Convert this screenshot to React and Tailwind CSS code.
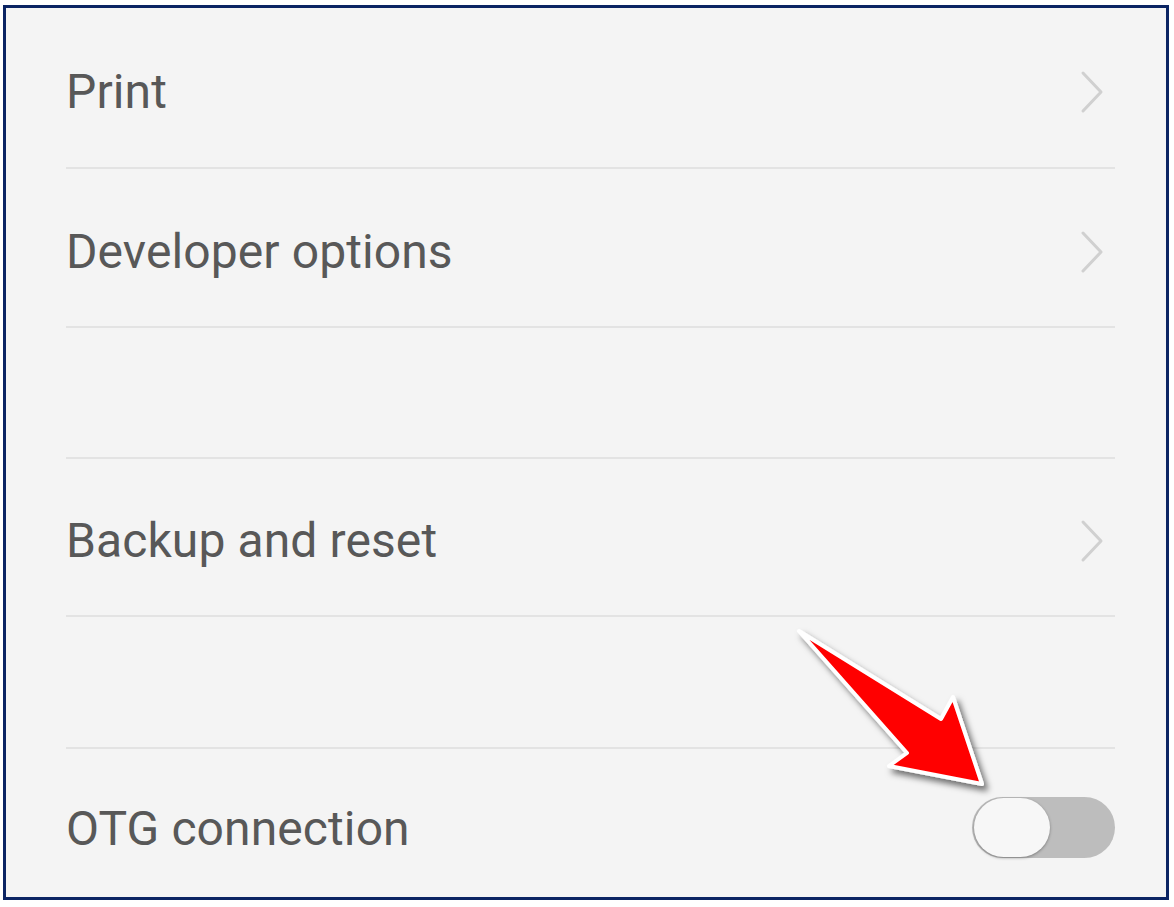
import React from 'react';

const Chevron = () => (
    <svg width="26" height="44" viewBox="0 0 26 44">
        <path d="M4 3 L22 22 L4 41" fill="none" stroke="#d0d0d0" strokeWidth="3" strokeLinecap="round" strokeLinejoin="round" />
    </svg>
);

const Divider = () => <div className="h-[2px] bg-[#e3e3e3]" />;

const Row = ({ label, height, chevron }) => (
    <div className={`flex items-center justify-between pt-2 ${height}`}>
        {label && <span className="text-[48px] text-[#585858] tracking-[0.1px]">{label}</span>}
        {chevron && <div className="mr-[10px]"><Chevron /></div>}
    </div>
);

const Arrow = () => (
    <svg className="absolute left-[780px] top-[615px] pointer-events-none" width="230" height="190" viewBox="780 615 230 190">
        <defs>
            <filter id="sh" x="-20%" y="-20%" width="140%" height="140%">
                <feDropShadow dx="4" dy="5" stdDeviation="3" floodColor="#000" floodOpacity="0.55" />
            </filter>
        </defs>
        <polygon
            points="799,631 941,719 953,697 982,784 889,766 907,753"
            fill="#ff0000"
            stroke="#ffffff"
            strokeWidth="4"
            strokeLinejoin="round"
            filter="url(#sh)"
        />
    </svg>
);

const Toggle = () => (
    <div className="relative w-[143px] h-[61px] rounded-full bg-[#bdbdbd] mt-[-4px]">
        <div className="absolute left-[2px] top-[1px] w-[76px] h-[59px] rounded-full bg-[#f7f7f7] shadow-[0_1px_3px_rgba(0,0,0,0.35)]" />
    </div>
);

export default function App() {
    return (
        <div className="relative w-[1174px] h-[907px] bg-white" style={{ fontFamily: 'Roboto, "Noto Sans", sans-serif' }}>
            <div className="absolute left-[3px] top-[5px] w-[1166px] h-[895px] border-[3px] border-[#0b2463] bg-[#f4f4f4] pl-[60px] pr-[51px] flex flex-col">
                <Row label="Print" height="h-[159px]" chevron />
                <Divider />
                <Row label="Developer options" height="h-[157px]" chevron />
                <Divider />
                <Row height="h-[129px]" />
                <Divider />
                <Row label="Backup and reset" height="h-[156px]" chevron />
                <Divider />
                <Row height="h-[130px]" />
                <Divider />
                <div className="flex items-center justify-between flex-1 pt-[12px]">
                    <span className="text-[48px] text-[#585858] tracking-[0.1px]">OTG connection</span>
                    <Toggle />
                </div>
            </div>
            <Arrow />
        </div>
    );
}
